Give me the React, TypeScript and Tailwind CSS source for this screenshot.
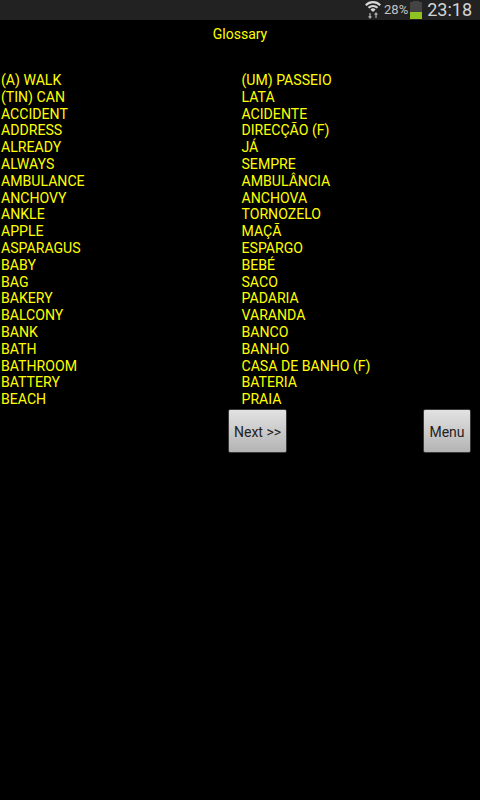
const rows: [string, string][] = [
  ["(A) WALK", "(UM) PASSEIO"],
  ["(TIN) CAN", "LATA"],
  ["ACCIDENT", "ACIDENTE"],
  ["ADDRESS", "DIRECÇÃO (F)"],
  ["ALREADY", "JÁ"],
  ["ALWAYS", "SEMPRE"],
  ["AMBULANCE", "AMBULÂNCIA"],
  ["ANCHOVY", "ANCHOVA"],
  ["ANKLE", "TORNOZELO"],
  ["APPLE", "MAÇÃ"],
  ["ASPARAGUS", "ESPARGO"],
  ["BABY", "BEBÉ"],
  ["BAG", "SACO"],
  ["BAKERY", "PADARIA"],
  ["BALCONY", "VARANDA"],
  ["BANK", "BANCO"],
  ["BATH", "BANHO"],
  ["BATHROOM", "CASA DE BANHO (F)"],
  ["BATTERY", "BATERIA"],
  ["BEACH", "PRAIA"],
];

const btn =
  "h-[44px] pt-[2px] flex items-center justify-center rounded-[2px] bg-gradient-to-b from-[#e2e2e2] to-[#b4b4b4] text-[#222] text-[14px] leading-[16px] border border-[#3a3a3a]";

export default function App() {
  return (
    <div className="w-[480px] h-[800px] bg-black flex flex-col overflow-hidden font-['Roboto',sans-serif]">
      <div className="h-[20px] bg-[#222222] flex items-center justify-end text-[#c8c8c8]">
        <svg width="18" height="18" viewBox="0 0 18 18">
          <path d="M1 6.5 A11 11 0 0 1 17 6.5 L15.4 8 A9 9 0 0 0 2.6 8 Z" fill="#d8d8d8" transform="translate(0 -3)" />
          <path d="M3.8 9 A7.5 7.5 0 0 1 14.2 9 L12.8 10.4 A5.5 5.5 0 0 0 5.2 10.4 Z" fill="#d8d8d8" transform="translate(0 -3)" />
          <path d="M6.4 11.4 A4 4 0 0 1 11.6 11.4 L9 14 Z" fill="#d8d8d8" transform="translate(0 -3)" />
          <path d="M6 12 v5 M4.6 15.4 L6 17 L7.4 15.4 M12 17 v-5 M10.6 13.6 L12 12 L13.4 13.6" stroke="#a8a8a8" strokeWidth="1.3" fill="none" />
        </svg>
        <span className="ml-[2px] text-[13px] leading-[20px] text-[#c4c4c4]">28%</span>
        <div className="ml-[2px] w-[12px] h-[17px] relative bg-[#444] mt-[1px]">
          <div className="absolute left-[3px] -top-[1px] w-[6px] h-[1px] bg-[#444]" />
          <div className="absolute bottom-0 left-0 right-0 h-[7px] bg-[#8fc31f]" />
        </div>
        <span className="ml-[5px] mr-[8px] text-[18px] leading-[20px] text-[#d4d4d4]">23:18</span>
      </div>
      <div className="h-[26px] pt-[4px] text-center text-[14px] leading-[20px] text-[#ffff00]">Glossary</div>
      <div className="mt-[26px] flex flex-col text-[14.1px] leading-[16.8px] text-[#ffff00]">
        {rows.map(([a, b]) => (
          <div key={a} className="flex h-[16.8px] items-center">
            <span className="w-[241.5px] pl-[1px] whitespace-nowrap">{a}</span>
            <span className="whitespace-nowrap">{b}</span>
          </div>
        ))}
      </div>
      <div className="mt-[1.5px] flex">
        <button className={btn + " ml-[228px] w-[59px]"}>Next &gt;&gt;</button>
        <button className={btn + " ml-[136px] w-[48px]"}>Menu</button>
      </div>
    </div>
  );
}
